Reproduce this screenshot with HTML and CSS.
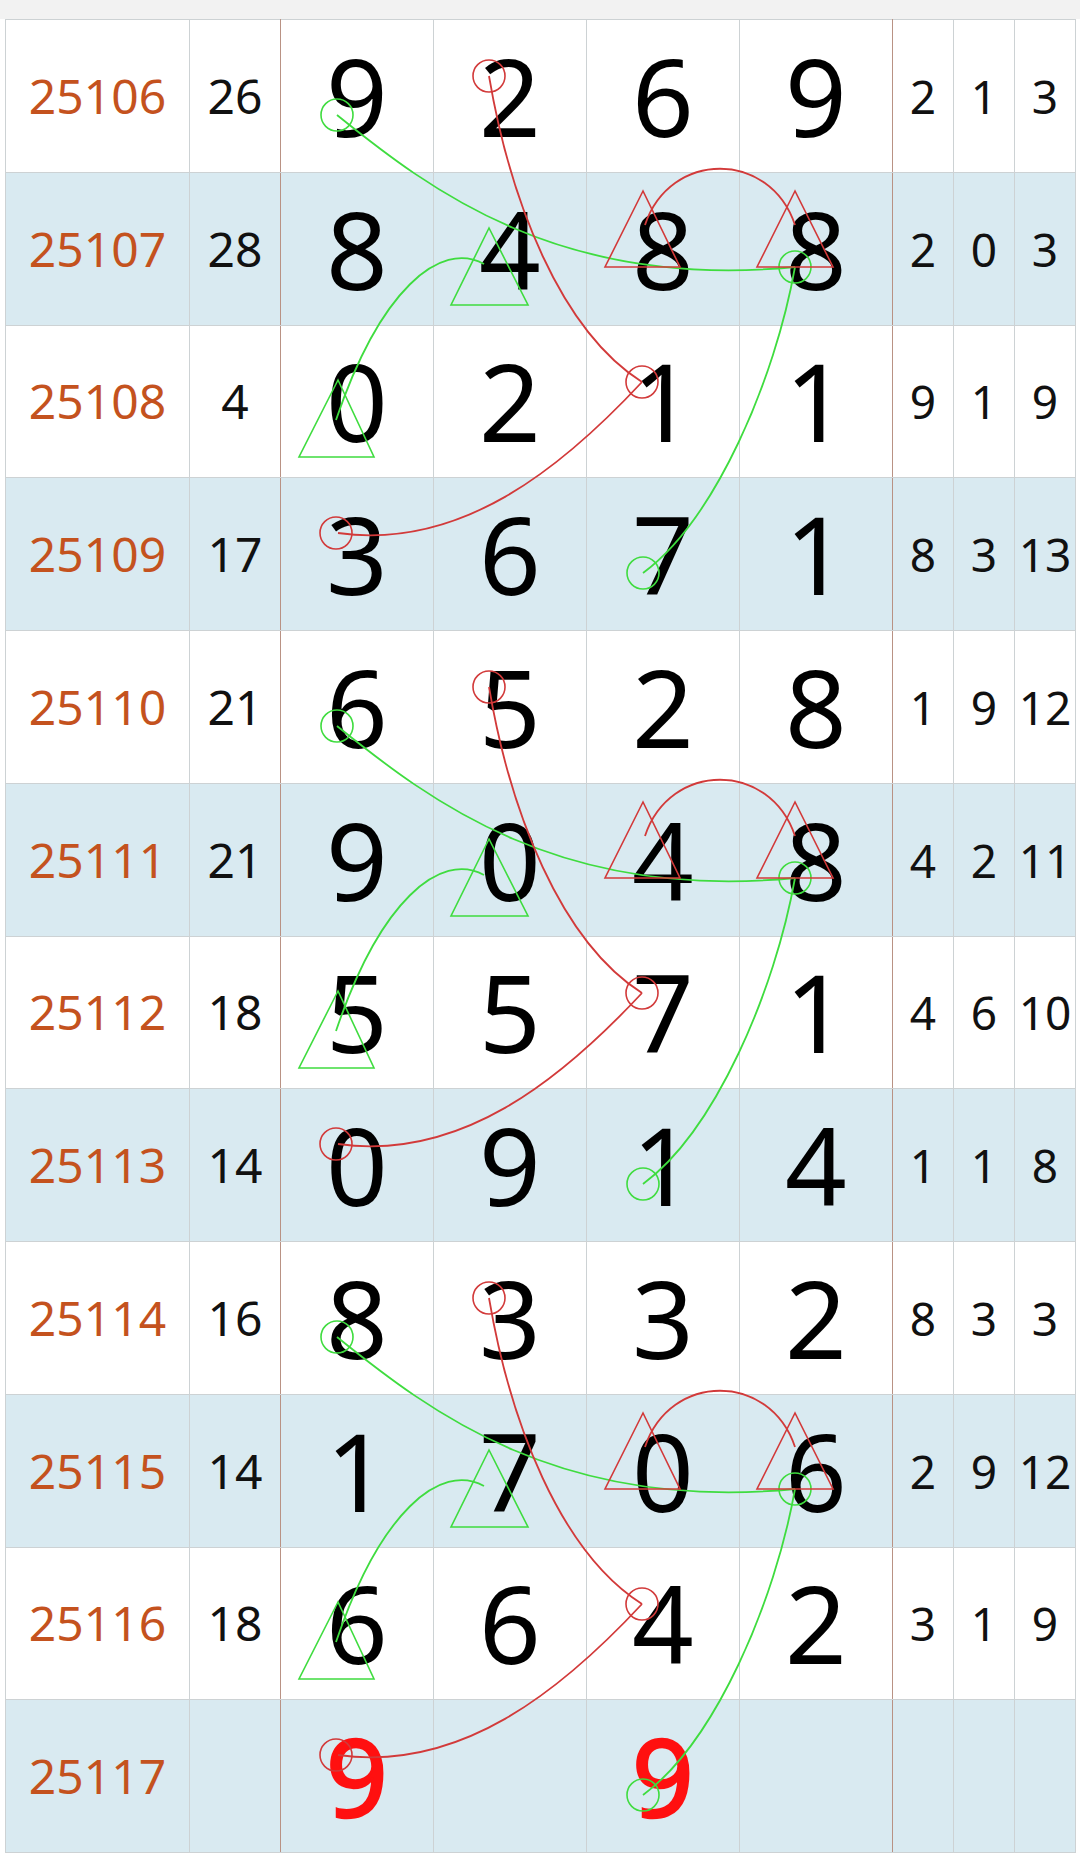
FILE: index.html
```html
<!DOCTYPE html>
<html>
<head>
    <title>Trend Chart</title>
    <link rel="stylesheet" href="styles.css">
</head>
<body>
    <div class="topbar"></div>
    <div class="board">
        <table class="trend">
            <colgroup>
                <col class="c-issue">
                <col class="c-sum">
                <col class="c-digit">
                <col class="c-digit">
                <col class="c-digit">
                <col class="c-digit">
                <col class="c-small">
                <col class="c-small">
                <col class="c-small">
            </colgroup>
            <tbody>
                <tr><td class="issue">25106</td><td class="sum">26</td><td class="d">9</td><td class="d">2</td><td class="d">6</td><td class="d last">9</td><td class="s">2</td><td class="s">1</td><td class="s">3</td></tr>
                <tr><td class="issue">25107</td><td class="sum">28</td><td class="d">8</td><td class="d">4</td><td class="d">8</td><td class="d last">8</td><td class="s">2</td><td class="s">0</td><td class="s">3</td></tr>
                <tr><td class="issue">25108</td><td class="sum">4</td><td class="d">0</td><td class="d">2</td><td class="d">1</td><td class="d last">1</td><td class="s">9</td><td class="s">1</td><td class="s">9</td></tr>
                <tr><td class="issue">25109</td><td class="sum">17</td><td class="d">3</td><td class="d">6</td><td class="d">7</td><td class="d last">1</td><td class="s">8</td><td class="s">3</td><td class="s">13</td></tr>
                <tr><td class="issue">25110</td><td class="sum">21</td><td class="d">6</td><td class="d">5</td><td class="d">2</td><td class="d last">8</td><td class="s">1</td><td class="s">9</td><td class="s">12</td></tr>
                <tr><td class="issue">25111</td><td class="sum">21</td><td class="d">9</td><td class="d">0</td><td class="d">4</td><td class="d last">8</td><td class="s">4</td><td class="s">2</td><td class="s">11</td></tr>
                <tr><td class="issue">25112</td><td class="sum">18</td><td class="d">5</td><td class="d">5</td><td class="d">7</td><td class="d last">1</td><td class="s">4</td><td class="s">6</td><td class="s">10</td></tr>
                <tr><td class="issue">25113</td><td class="sum">14</td><td class="d">0</td><td class="d">9</td><td class="d">1</td><td class="d last">4</td><td class="s">1</td><td class="s">1</td><td class="s">8</td></tr>
                <tr><td class="issue">25114</td><td class="sum">16</td><td class="d">8</td><td class="d">3</td><td class="d">3</td><td class="d last">2</td><td class="s">8</td><td class="s">3</td><td class="s">3</td></tr>
                <tr><td class="issue">25115</td><td class="sum">14</td><td class="d">1</td><td class="d">7</td><td class="d">0</td><td class="d last">6</td><td class="s">2</td><td class="s">9</td><td class="s">12</td></tr>
                <tr><td class="issue">25116</td><td class="sum">18</td><td class="d">6</td><td class="d">6</td><td class="d">4</td><td class="d last">2</td><td class="s">3</td><td class="s">1</td><td class="s">9</td></tr>
                <tr><td class="issue">25117</td><td class="sum"></td><td class="d pick">9</td><td class="d"></td><td class="d pick">9</td><td class="d last"></td><td class="s"></td><td class="s"></td><td class="s"></td></tr>
            </tbody>
        </table>

        <!-- hand drawn marks over the table, one 4-row pattern repeated -->
        <svg class="marks" width="1069" height="1833" viewBox="0 0 1069 1833">
            <defs>
                <g id="pattern">
                    <path class="ln green" d="M332,96 C425,171 555,271 790,248"/>
                    <path class="ln red" d="M484,57 C505,181 555,311 637,363"/>
                    <path class="ln red" d="M640,206 C665,131 765,131 790,206"/>
                    <path class="ln green" d="M479,245 C435,221 375,271 331,401"/>
                    <path class="ln red" d="M637,363 C555,451 455,531 333,514"/>
                    <path class="ln green" d="M790,248 C770,361 710,501 638,554"/>

                    <circle class="mk green" cx="332" cy="96" r="16"/>
                    <circle class="mk green" cx="790" cy="248" r="16"/>
                    <circle class="mk green" cx="638" cy="554" r="16"/>
                    <circle class="mk red" cx="484" cy="57" r="16"/>
                    <circle class="mk red" cx="637" cy="363" r="16"/>
                    <circle class="mk red" cx="331" cy="514" r="16"/>

                    <polygon class="mk red" points="638,172 600,248 675,248"/>
                    <polygon class="mk red" points="790,172 752,248 828,248"/>
                    <polygon class="mk green" points="484,209 446,286 523,286"/>
                    <polygon class="mk green" points="333,361 294,438 369,438"/>
                </g>
            </defs>
            <use href="#pattern"/>
            <use href="#pattern" y="611"/>
            <use href="#pattern" y="1222"/>
        </svg>
    </div>
</body>
</html>
```

FILE: styles.css
```css
body {
    margin: 0;
    background: #ffffff;
    font-family: "Noto Sans", "Open Sans", sans-serif;
}

.topbar {
    height: 19px;
    background: #f2f2f2;
}

.board {
    position: relative;
    margin-left: 5px;
    width: 1069px;
}

.trend {
    border-collapse: collapse;
    table-layout: fixed;
    width: 1069px;
    border: 1px solid #e2c4c0;
}

.c-issue { width: 184px; }
.c-sum { width: 91px; }
.c-digit { width: 153px; }
.c-small { width: 61px; }

.trend td {
    height: 151.75px;
    padding: 0;
    text-align: center;
    vertical-align: middle;
    border: 1px solid #cdd2d4;
    line-height: 1;
}

.trend tr:nth-child(even) td {
    background: #d9eaf1;
}

.trend tr:nth-child(odd) td {
    background: #ffffff;
}

.trend td.sum,
.trend td.last {
    border-right-color: #b99284;
}

.issue {
    font-size: 48px;
    color: #c4521e;
}

.sum {
    font-size: 48px;
    color: #111;
}

.d {
    font-size: 108px;
    color: #000;
}

.d.pick {
    color: #ff1010;
    -webkit-text-stroke: 2.5px #ff1010;
}

.s {
    font-size: 46px;
    color: #111;
}

.marks {
    position: absolute;
    top: 0;
    left: 0;
    pointer-events: none;
    overflow: visible;
}

.ln {
    fill: none;
    stroke-width: 1.8;
}

.mk {
    fill: none;
    stroke-width: 1.6;
}

.green {
    stroke: #3fdc3f;
}

.red {
    stroke: #d23a3a;
}
```
